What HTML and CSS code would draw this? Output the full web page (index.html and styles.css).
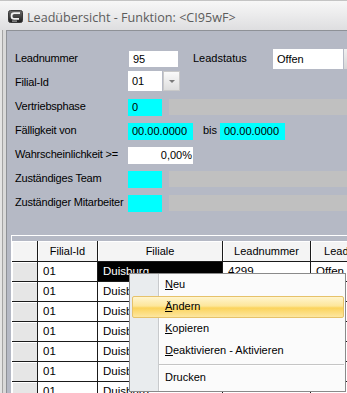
FILE: index.html
```html
<!DOCTYPE html>
<html>
<head>
<meta charset="utf-8">
<link rel="stylesheet" href="styles.css">
</head>
<body>
<div class="titlebar">
  <svg class="logo" width="15" height="14" viewBox="0 0 15 14">
    <defs>
      <linearGradient id="lg" x1="0" y1="0" x2="0" y2="1">
        <stop offset="0" stop-color="#6a6a6a"/>
        <stop offset="1" stop-color="#1c1c1c"/>
      </linearGradient>
    </defs>
    <rect x="0.5" y="0.5" width="14" height="12" rx="2" fill="url(#lg)" stroke="#3a3a3a"/>
    <path d="M12 3.2 H6.2 Q3.6 3.2 3.6 5.6 V6.4 Q3.6 8.8 6.2 8.8 H11" fill="none" stroke="#f2f2f2" stroke-width="1.8"/>
    <rect x="4" y="10.6" width="5" height="1" fill="#bdbdbd"/>
  </svg>
  <span class="title">Leadübersicht - Funktion: &lt;CI95wF&gt;</span>
</div>
<div class="frame">
  <div class="edge"></div>
  <div class="content">
    <div class="form">
      <div class="row">
        <span class="lbl">Leadnummer</span>
        <span class="box white nr">95</span>
        <span class="lbl2">Leadstatus</span>
        <span class="box white status">Offen</span>
        <span class="stub"></span>
      </div>
      <div class="row">
        <span class="lbl">Filial-Id</span>
        <span class="box white filial">01</span>
        <span class="ddbtn"><span class="tri"></span></span>
      </div>
      <div class="row">
        <span class="lbl">Vertriebsphase</span>
        <span class="box cyan short">0</span>
        <span class="bar"></span>
      </div>
      <div class="row">
        <span class="lbl">Fälligkeit von</span>
        <span class="box cyan date">00.00.0000</span>
        <span class="bis">bis</span>
        <span class="box cyan date">00.00.0000</span>
      </div>
      <div class="row">
        <span class="lbl">Wahrscheinlichkeit &gt;=</span>
        <span class="box white date right">0,00%</span>
      </div>
      <div class="row">
        <span class="lbl">Zuständiges Team</span>
        <span class="box cyan short"></span>
        <span class="bar"></span>
      </div>
      <div class="row">
        <span class="lbl">Zuständiger Mitarbeiter</span>
        <span class="box cyan short"></span>
        <span class="bar"></span>
      </div>
    </div>
    <div class="gridpanel">
      <div class="grow ghead">
        <span class="c sel"></span>
        <span class="c c1">Filial-Id</span>
        <span class="c c2">Filiale</span>
        <span class="c c3">Leadnummer</span>
        <span class="c c4">Leadstatus</span>
      </div>
      <div class="grow">
        <span class="c sel"></span><span class="c c1">01</span><span class="c c2 active">Duisburg</span><span class="c c3">4299</span><span class="c c4">Offen</span>
      </div>
      <div class="grow">
        <span class="c sel"></span><span class="c c1">01</span><span class="c c2">Duisburg</span><span class="c c3"></span><span class="c c4"></span>
      </div>
      <div class="grow">
        <span class="c sel"></span><span class="c c1">01</span><span class="c c2">Duisburg</span><span class="c c3"></span><span class="c c4"></span>
      </div>
      <div class="grow">
        <span class="c sel"></span><span class="c c1">01</span><span class="c c2">Duisburg</span><span class="c c3"></span><span class="c c4"></span>
      </div>
      <div class="grow">
        <span class="c sel"></span><span class="c c1">01</span><span class="c c2">Duisburg</span><span class="c c3"></span><span class="c c4"></span>
      </div>
      <div class="grow">
        <span class="c sel"></span><span class="c c1">01</span><span class="c c2">Duisburg</span><span class="c c3"></span><span class="c c4"></span>
      </div>
      <div class="grow">
        <span class="c sel"></span><span class="c c1">01</span><span class="c c2">Duisburg</span><span class="c c3"></span><span class="c c4"></span>
      </div>
    </div>
  </div>
</div>
<div class="menu">
  <div class="strip"></div>
  <div class="items">
    <div class="item"><u>N</u>eu</div>
    <div class="item hot"><u>Ä</u>ndern</div>
    <div class="item"><u>K</u>opieren</div>
    <div class="item"><u>D</u>eaktivieren - Aktivieren</div>
    <div class="sep"></div>
    <div class="item">Drucken</div>
  </div>
</div>
</body>
</html>
```
FILE: styles.css
```css
html, body {
  margin: 0;
  padding: 0;
}
body {
  width: 347px;
  height: 393px;
  overflow: hidden;
  position: relative;
  font-family: "Liberation Sans", Arial, sans-serif;
  font-size: 11px;
  color: #000;
  background: #b5b9c5;
}
.titlebar {
  height: 30px;
  box-sizing: border-box;
  border-top: 1px solid #c4c4c4;
  background: linear-gradient(#f7f7f7, #ececed 45%, #dedee0);
  display: flex;
  align-items: center;
  padding: 3px 0 0 8px;
}
.logo {
  flex: none;
  display: block;
}
.title {
  margin-left: 4px;
  font-family: "Open Sans", "Liberation Sans", sans-serif;
  font-size: 12.6px;
  color: #5c5c5c;
  white-space: nowrap;
}
.frame {
  display: flex;
  height: 363px;
}
.edge {
  width: 7px;
  flex: none;
  background: linear-gradient(to right, #e4e4e4 0 2px, #a4a4a4 2px 3px, #d9d9d9 3px 6px, #8e9197 6px 7px);
}
.content {
  flex: 1;
  min-width: 0;
  border-top: 1px solid #8e9197;
  padding-top: 16px;
  background: #b5b9c5;
}
.form {
  padding-left: 8px;
}
.row {
  display: flex;
  align-items: center;
  height: 24px;
  white-space: nowrap;
}
.lbl {
  width: 113px;
  flex: none;
  padding-bottom: 3px;
  letter-spacing: -0.2px;
}
.lbl2 {
  width: 80px;
  flex: none;
  margin-left: 15px;
  padding-bottom: 3px;
}
.box {
  flex: none;
  box-sizing: border-box;
  height: 17px;
  line-height: 17px;
  padding: 0 4px;
}
.white { background: #fff; }
.cyan { background: #00ffff; }
.nr { width: 49px; height: 16px; line-height: 16px; margin-left: 1px; }
.status { width: 70px; height: 20px; line-height: 20px; margin-top: -1px; }
.stub {
  width: 16px;
  height: 20px;
  flex: none;
  margin-left: 1px;
  margin-top: -1px;
  background: linear-gradient(#f0f0f0, #d6d6d6);
}
.filial { width: 34px; height: 20px; line-height: 20px; margin-top: -4px; }
.ddbtn {
  width: 17px;
  height: 20px;
  flex: none;
  margin-top: -4px;
  margin-left: 1px;
  box-sizing: border-box;
  border: 1px solid #c9c9c9;
  background: linear-gradient(#fafafa, #dedede);
  display: flex;
  align-items: center;
  justify-content: center;
}
.tri {
  width: 0;
  height: 0;
  border-left: 3px solid transparent;
  border-right: 3px solid transparent;
  border-top: 3px solid #7a7a7a;
}
.short { width: 34px; }
.date { width: 65px; padding: 0 4px; }
.right { text-align: right; padding-right: 1px; }
.bar {
  flex: 1;
  height: 16px;
  margin-left: 7px;
  background: #c0c0c0;
}
.bis {
  width: 14px;
  margin-left: 10px;
  margin-right: 3px;
  padding-bottom: 3px;
}
.gridpanel {
  margin-top: 20px;
  margin-left: 4px;
  padding-top: 5px;
  border-top: 1px solid #ffffff;
  border-left: 1px solid #ffffff;
  height: 200px;
}
.grow {
  display: flex;
  height: 20px;
  white-space: nowrap;
}
.c {
  flex: none;
  box-sizing: border-box;
  height: 20px;
  line-height: 19px;
  border-right: 1px solid #1a1a1a;
  border-bottom: 1px solid #1a1a1a;
  background: #fff;
  padding-left: 5px;
  overflow: hidden;
  font-size: 11.5px;
}
.ghead {
  height: 21px;
}
.ghead .c {
  height: 21px;
  line-height: 20px;
  background: #f4f4f4;
  text-align: center;
  padding-left: 0;
  font-size: 11px;
  box-shadow: inset 1px 1px 0 #ffffff;
}
.sel {
  width: 26px;
  background: #e6e6e6;
  box-shadow: inset 1px 1px 0 #ffffff;
}
.c1 { width: 60px; }
.c2 { width: 125px; }
.c3 { width: 88px; }
.c4 { width: 80px; border-right: none; }
.active {
  background: #000;
  color: #fff;
}
.menu {
  position: absolute;
  left: 129px;
  top: 273px;
  width: 217px;
  height: 119px;
  box-sizing: border-box;
  border: 1px solid #8a8a8a;
  background: #fbfbfb;
  display: flex;
}
.strip {
  position: absolute;
  left: 0;
  top: 0;
  bottom: 0;
  width: 28px;
  background: #e9ecee;
  border-right: 1px solid #c8cacc;
  box-shadow: 1px 0 0 #ffffff;
}
.items {
  position: relative;
  flex: 1;
}
.item {
  height: 22px;
  line-height: 21px;
  padding-left: 33px;
  margin: 0 1px 0 2px;
  box-sizing: border-box;
  white-space: nowrap;
}
.item u {
  text-decoration: underline;
  text-underline-offset: 1px;
}
.hot {
  border: 1px solid #e6c26a;
  border-radius: 2px;
  line-height: 19px;
  padding-left: 32px;
  background: linear-gradient(#fff5cf, #fde69a 45%, #fbd35c 55%, #fde7a0);
}
.sep {
  height: 5px;
  margin-left: 29px;
  margin-right: 1px;
  position: relative;
}
.sep::after {
  content: "";
  position: absolute;
  left: 0;
  right: 0;
  top: 2px;
  height: 1px;
  background: #c5c5c5;
  box-shadow: 0 1px 0 #ffffff;
}
```
